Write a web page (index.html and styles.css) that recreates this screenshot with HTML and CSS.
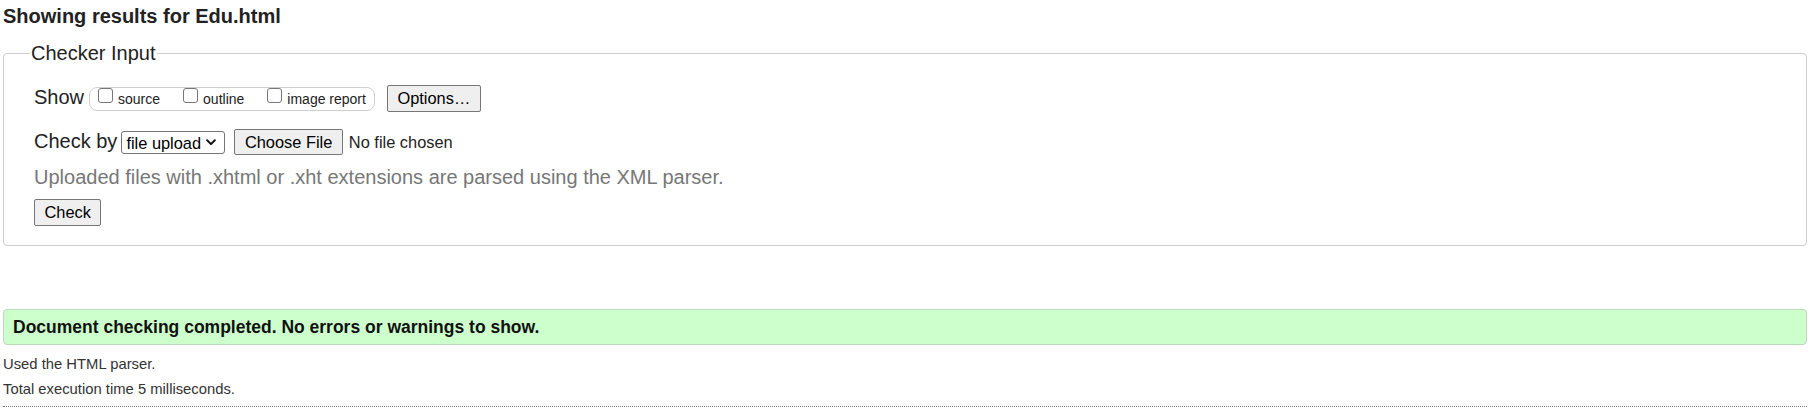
FILE: index.html
```html
<!DOCTYPE html>
<html lang="en">
<head>
<meta charset="utf-8">
<title>Showing results for Edu.html - Nu Html Checker</title>
<link rel="stylesheet" href="styles.css">
</head>
<body>
<h2 class="title">Showing results for Edu.html</h2>
<fieldset class="checker">
  <legend class="checker-legend">Checker Input</legend>
  <div class="row row-show">
    <span class="row-label">Show</span>
    <span class="pill">
      <label class="opt"><input class="cb" type="checkbox"><span class="opt-text">source</span></label>
      <label class="opt"><input class="cb" type="checkbox"><span class="opt-text">outline</span></label>
      <label class="opt opt-last"><input class="cb" type="checkbox"><span class="opt-text">image report</span></label>
    </span>
    <button class="btn btn-options" type="button">Options…</button>
  </div>
  <div class="row row-check">
    <span class="row-label">Check by</span>
    <span class="select-wrap">
      <select class="select">
        <option>file upload</option>
        <option>address</option>
        <option>text input</option>
      </select>
      <svg class="chevron" width="10" height="7" viewBox="0 0 10 7" aria-hidden="true"><polyline points="1.2,1.3 5,5.1 8.8,1.3" fill="none" stroke="#111" stroke-width="2" stroke-linecap="round" stroke-linejoin="round"/></svg>
    </span>
    <button class="btn btn-file" type="button">Choose File</button>
    <span class="file-status">No file chosen</span>
  </div>
  <p class="hint">Uploaded files with .xhtml or .xht extensions are parsed using the XML parser.</p>
  <button class="btn btn-check" type="submit">Check</button>
</fieldset>
<p class="success">Document checking completed. No errors or warnings to show.</p>
<p class="details details-first">Used the HTML parser.</p>
<p class="details">Total execution time 5 milliseconds.</p>
<hr class="rule">
</body>
</html>
```

FILE: styles.css
```css
html, body {
  background: #fff;
}
body {
  margin: 0;
  padding: 5px 6px 0 3px;
  font-family: "Liberation Sans", Arial, sans-serif;
  color: #222;
}
.title {
  margin: 0 0 14px;
  font-size: 20px;
  line-height: 23px;
  font-weight: 700;
  color: #222;
}
.checker {
  margin: 0;
  border: 1px solid #cdcdcd;
  border-radius: 4px;
  padding: 0 30px 19px 30px;
  min-width: 0;
}
.checker-legend {
  font-size: 20px;
  line-height: 23px;
  padding: 0 1px;
  margin-left: -4px;
  color: #222;
}
.row {
  display: flex;
  align-items: flex-start;
}
.row-show {
  margin-top: 20px;
  height: 27px;
}
.row-label {
  font-size: 20px;
  line-height: 24px;
  color: #222;
}
.pill {
  display: flex;
  align-items: flex-start;
  box-sizing: border-box;
  height: 24px;
  margin: 2px 0 0 5px;
  padding: 0 8px 0 8px;
  border: 1px solid #cfcfcf;
  border-radius: 8px;
}
.opt {
  display: flex;
  align-items: flex-start;
  margin-right: 23px;
}
.opt-last {
  margin-right: 0;
}
.cb {
  appearance: none;
  -webkit-appearance: none;
  box-sizing: border-box;
  width: 15px;
  height: 15px;
  margin: 0 5px 0 0;
  border: 1px solid #767676;
  border-radius: 3px;
  background: #fff;
}
.opt-text {
  font-size: 14px;
  line-height: 16px;
  padding-top: 3px;
  color: #222;
}
.btn {
  box-sizing: border-box;
  margin: 0;
  padding: 0 9.5px;
  font-family: "Liberation Sans", Arial, sans-serif;
  font-size: 16.4px;
  color: #000;
  background: #efefef;
  border: 1px solid #767676;
  border-radius: 2px;
}
.btn-options {
  height: 27px;
  margin-left: 12px;
}
.row-check {
  margin-top: 17px;
  height: 26px;
}
.select-wrap {
  position: relative;
  display: block;
  margin: 2px 0 0 4px;
}
.select {
  display: block;
  box-sizing: border-box;
  width: 104px;
  height: 23px;
  margin: 0;
  padding: 0 0 0 4px;
  appearance: none;
  -webkit-appearance: none;
  font-family: "Liberation Sans", Arial, sans-serif;
  font-size: 16.4px;
  color: #000;
  background: #fff;
  border: 1px solid #767676;
  border-radius: 3px;
}
.chevron {
  position: absolute;
  left: 85px;
  top: 8px;
  pointer-events: none;
}
.btn-file {
  height: 26px;
  margin-left: 9px;
}
.file-status {
  margin: 3px 0 0 6px;
  font-size: 16.4px;
  line-height: 20px;
  color: #222;
}
.hint {
  margin: 11px 0 0;
  font-size: 20px;
  line-height: 23px;
  color: #777;
}
.btn-check {
  display: block;
  height: 27px;
  margin-top: 10px;
}
.success {
  margin: 63px 0 0;
  padding: 7px 9px 7px;
  font-size: 17.5px;
  line-height: 20px;
  font-weight: 700;
  color: #111;
  background: #ccffcc;
  border: 1px solid #bcd9bc;
  border-radius: 4px;
}
.details {
  margin: 7.5px 0 0;
  font-size: 14.8px;
  line-height: 17px;
  color: #333;
}
.details-first {
  margin-top: 11px;
}
.rule {
  margin: 8.5px 0 0;
  border: 0;
  border-top: 1px dotted #777;
  height: 0;
}
```
